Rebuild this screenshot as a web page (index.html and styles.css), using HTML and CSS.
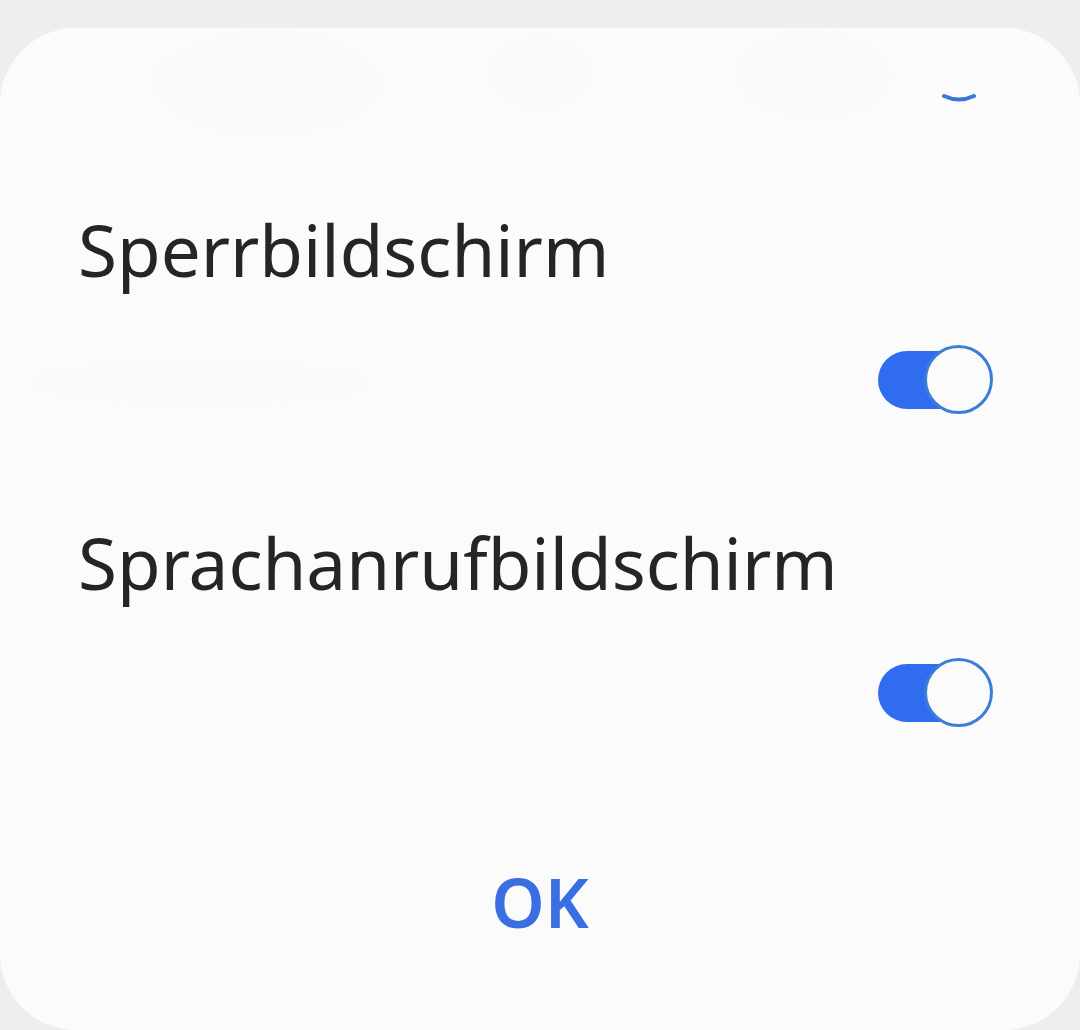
FILE: index.html
```html
<!DOCTYPE html>
<html lang="de">
<head>
<meta charset="utf-8">
<link rel="stylesheet" href="styles.css">
</head>
<body>
<div class="dialog">
  <div class="ghosts">
    <span class="ghost g1"></span>
    <span class="ghost g2"></span>
    <span class="ghost g3"></span>
    <span class="ghost g4"></span>
  </div>
  <div class="peek">
    <svg class="peek-arc" width="36" height="12" viewBox="0 0 36 12">
      <path d="M3 3 Q18 10 33 3" fill="none" stroke="#3a76d6" stroke-width="4" stroke-linecap="round"/>
    </svg>
  </div>
  <div class="item">
    <div class="title">Sperrbildschirm</div>
    <div class="switch-row">
      <span class="switch"><span class="track"></span><span class="thumb"></span></span>
    </div>
  </div>
  <div class="item second">
    <div class="title">Sprachanrufbildschirm</div>
    <div class="switch-row">
      <span class="switch"><span class="track"></span><span class="thumb"></span></span>
    </div>
  </div>
  <div class="actions">
    <button class="ok">OK</button>
  </div>
</div>
</body>
</html>
```

FILE: styles.css
```css
html, body {
  margin: 0;
  padding: 0;
}
body {
  background: #eeeeee;
  width: 1080px;
  height: 1030px;
  overflow: hidden;
  font-family: "Noto Sans", "Open Sans", sans-serif;
}
.dialog {
  position: relative;
  margin-top: 28px;
  height: 1002px;
  box-sizing: border-box;
  background: #fbfbfb;
  border-radius: 76px;
  padding: 0 87px 0 78px;
  display: flex;
  flex-direction: column;
  overflow: hidden;
}
.ghosts {
  position: absolute;
  inset: 0;
  pointer-events: none;
}
.ghost {
  position: absolute;
  background: #f9f9f9;
  border-radius: 50%;
  filter: blur(3px);
}
.g1 { left: 155px; top: 5px; width: 225px; height: 100px; }
.g2 { left: 490px; top: 10px; width: 100px; height: 70px; }
.g3 { left: 738px; top: 5px; width: 150px; height: 85px; }
.g4 { left: 30px; top: 335px; width: 340px; height: 40px; }
.peek {
  position: relative;
  height: 14px;
  margin-top: 65px;
  display: flex;
  justify-content: flex-end;
  padding-right: 16px;
}
.peek-arc {
  display: block;
}
.item {
  position: relative;
  display: flex;
  flex-direction: column;
  margin-top: 98px;
}
.item.second {
  margin-top: 104px;
}
.title {
  font-size: 71px;
  line-height: 90px;
  color: #252525;
}
.switch-row {
  display: flex;
  justify-content: flex-end;
  margin-top: 50px;
}
.switch {
  position: relative;
  width: 115px;
  height: 69px;
  display: block;
}
.track {
  position: absolute;
  left: 0;
  top: 6px;
  width: 100px;
  height: 58px;
  border-radius: 29px;
  background: #2f6cf0;
}
.thumb {
  position: absolute;
  right: 0;
  top: 0;
  width: 63px;
  height: 63px;
  border-radius: 50%;
  background: #fbfbfb;
  border: 3px solid #3a7ed8;
}
.actions {
  position: relative;
  display: flex;
  justify-content: center;
  margin-top: 135px;
  padding-left: 9px;
}
.ok {
  background: none;
  border: none;
  padding: 0;
  font-family: "Noto Sans", "Open Sans", sans-serif;
  font-weight: 600;
  font-size: 68px;
  line-height: 80px;
  color: #3a6fe3;
}
```
